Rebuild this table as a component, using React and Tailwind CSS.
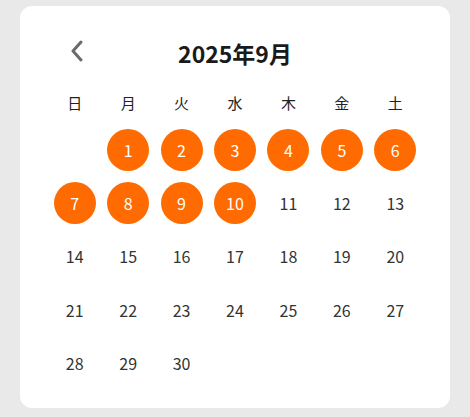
export default function App() {
  const weekdays = ["日", "月", "火", "水", "木", "金", "土"];
  const days = [null];
  for (let d = 1; d <= 30; d++) days.push(d);
  const selected = [1, 2, 3, 4, 5, 6, 7, 8, 9, 10];

  return (
    <div
      className="h-[417px] bg-[#e9e9e9] px-5 pt-[6px]"
      style={{ fontFamily: '"Noto Sans CJK JP", "Noto Sans", sans-serif' }}
    >
      <div className="h-[402px] rounded-xl bg-white px-[28px] pt-[27px]">
        <div className="relative flex h-[40px] items-center justify-center">
          <button className="absolute left-[21px] top-[7px] flex h-[22px] w-[16px] items-center justify-center">
            <svg width="14" height="22" viewBox="0 0 14 22" fill="none">
              <path d="M11 2 L3 11 L11 20" stroke="#6b6b6b" strokeWidth="3" strokeLinecap="round" strokeLinejoin="round" />
            </svg>
          </button>
          <h1 className="text-[23px] font-bold text-[#1a1a1a]">2025年9月</h1>
        </div>

        <div className="mt-[10px] grid h-[40px] grid-cols-7 items-center">
          {weekdays.map((w) => (
            <div key={w} className="text-center text-[15px] text-[#222]">
              {w}
            </div>
          ))}
        </div>

        <div className="grid grid-cols-7">
          {days.map((d, i) => (
            <div key={i} className="flex h-[53.33px] items-center justify-center">
              {d &&
                (selected.includes(d) ? (
                  <span className="flex h-[42px] w-[42px] items-center justify-center rounded-full bg-[#ff6b00] text-[16px] text-white">
                    {d}
                  </span>
                ) : (
                  <span className="text-[16px] text-[#333]">{d}</span>
                ))}
            </div>
          ))}
        </div>
      </div>
    </div>
  );
}
